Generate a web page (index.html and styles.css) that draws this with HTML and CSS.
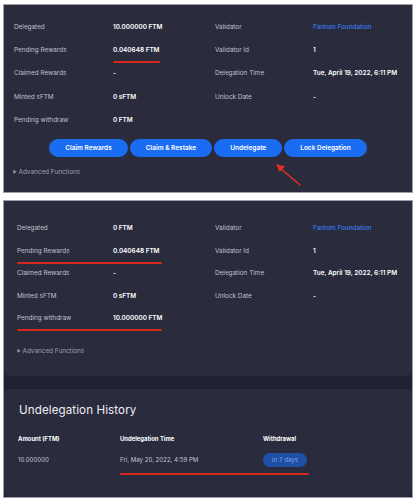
FILE: index.html
```html
<!DOCTYPE html>
<html lang="en">
<head>
    <meta charset="UTF-8">
    <meta name="viewport" content="width=device-width, initial-scale=1.0">
    <title>Delegation</title>
    <link rel="stylesheet" href="styles.css">
</head>
<body>

    <!-- delegation before undelegating -->
    <div class="panel panel-first">
        <div class="info">
            <div class="label">Delegated</div>
            <div class="value">10.000000 FTM</div>
            <div class="label">Validator</div>
            <div class="value link">Fantom Foundation</div>

            <div class="label">Pending Rewards</div>
            <div class="value mark mark-value">0.040648 FTM</div>
            <div class="label">Validator Id</div>
            <div class="value">1</div>

            <div class="label">Claimed Rewards</div>
            <div class="value">-</div>
            <div class="label">Delegation Time</div>
            <div class="value">Tue, April 19, 2022, 6:11 PM</div>

            <div class="label">Minted sFTM</div>
            <div class="value">0 sFTM</div>
            <div class="label">Unlock Date</div>
            <div class="value">-</div>

            <div class="label">Pending withdraw</div>
            <div class="value">0 FTM</div>
        </div>

        <div class="actions">
            <button class="btn">Claim Rewards</button>
            <button class="btn">Claim &amp; Restake</button>
            <button class="btn btn-undelegate">Undelegate</button>
            <button class="btn">Lock Delegation</button>
        </div>

        <div class="advanced"><span class="caret">&#9654;</span> Advanced Functions</div>

        <!-- arrow pointing at the undelegate button -->
        <svg class="arrow" width="30" height="26" viewBox="0 0 30 26">
            <line x1="26" y1="23" x2="6" y2="6" stroke="#e0301e" stroke-width="1.6" stroke-linecap="round"/>
            <polygon points="2,2 11,4.5 5.5,10" fill="#e0301e"/>
        </svg>
    </div>

    <!-- after undelegating -->
    <div class="panel panel-second">
        <div class="card card-info">
            <div class="info info-second">
                <div class="label">Delegated</div>
                <div class="value">0 FTM</div>
                <div class="label">Validator</div>
                <div class="value link">Fantom Foundation</div>

                <div class="label mark mark-row">Pending Rewards</div>
                <div class="value">0.040648 FTM</div>
                <div class="label">Validator Id</div>
                <div class="value">1</div>

                <div class="label">Claimed Rewards</div>
                <div class="value">-</div>
                <div class="label">Delegation Time</div>
                <div class="value">Tue, April 19, 2022, 6:11 PM</div>

                <div class="label">Minted sFTM</div>
                <div class="value">0 sFTM</div>
                <div class="label">Unlock Date</div>
                <div class="value">-</div>

                <div class="label mark mark-row">Pending withdraw</div>
                <div class="value">10.000000 FTM</div>
            </div>

            <div class="advanced advanced-second"><span class="caret">&#9654;</span> Advanced Functions</div>
        </div>

        <div class="card card-history">
            <h2 class="history-title">Undelegation History</h2>
            <div class="history">
                <div class="th">Amount (FTM)</div>
                <div class="th">Undelegation Time</div>
                <div class="th">Withdrawal</div>

                <div class="td">10.000000</div>
                <div class="td mark mark-time">Fri, May 20, 2022, 4:59 PM</div>
                <div class="td"><span class="pill">in 7 days</span></div>
            </div>
        </div>
    </div>

</body>
</html>
```

FILE: styles.css
```css
*
{
    box-sizing: border-box;
}

body
{
    margin: 0; padding: 4px 5px 2px 3px;
    background-color: #ffffff;
    font-family: Inter, "Noto Sans", sans-serif;
}

.panel
{
    position: relative;
    background-color: #2a2b3d;
    border: 1px solid #9d9ea8;
}

.panel-first
{
    height: 189px; padding-top: 10px;
}

.panel-second
{
    margin-top: 7px; height: 298px;
    background-color: #202130;
    display: flex; flex-direction: column; gap: 13px;
}

.card
{
    background-color: #2a2b3d; border-radius: 6px;
}

.card-info
{
    height: 175px; padding-top: 16px;
    border-radius: 0 0 6px 6px;
}

/* label / value grid */
.info
{
    display: grid;
    grid-template-columns: 99px 102px 98px 1fr;
    grid-auto-rows: 23.3px;
    align-items: center;
    padding-left: 10px;
    font-size: 6.4px;
}

.info-second
{
    grid-template-columns: 96px 102px 98px 1fr;
    grid-auto-rows: 22.5px;
    padding-left: 13px;
}

.label { color: #c0c1ca; }

.value { color: #ffffff; font-weight: 600; }

.link { color: #3d7bf0; font-weight: 500; }

/* red annotation lines */
.mark { position: relative; }

.mark::after
{
    content: ""; position: absolute; left: 0; height: 2px;
    background-color: #d8271c; border-radius: 1px;
}

.mark-value::after { top: 15px; width: 47px; }

.mark-row::after { top: 15px; width: 145px; }

.mark-time::after { top: 17px; width: 189px; }

.actions
{
    display: flex; justify-content: center; gap: 2px;
    margin-top: 8px;
}

.btn
{
    height: 18px; padding: 0 16px;
    border: none; border-radius: 9px;
    background-color: #1a6cf2; color: #ffffff;
    font-family: Inter, "Noto Sans", sans-serif;
    font-size: 6.5px; font-weight: 600;
}

.advanced
{
    margin-top: 11px; padding-left: 9px;
    color: #9fa0ab; font-size: 6.4px;
}

.advanced-second
{
    margin-top: 17px; padding-left: 13px;
}

.caret { font-size: 4px; vertical-align: 1px; }

.arrow
{
    position: absolute; left: 270px; top: 157px;
}

/* history card */
.card-history
{
    flex: 1; padding: 14px 14px 0 14px;
}

.history-title
{
    margin: 0; padding-left: 1px;
    font-size: 11.6px; font-weight: 400;
    color: #eeeef3; letter-spacing: 0.1px;
}

.history
{
    display: grid;
    grid-template-columns: 102px 143px 1fr;
    margin-top: 14px;
    grid-template-rows: 14px 29px;
    align-items: center;
}

.th
{
    font-size: 5.9px; font-weight: 700; color: #ffffff;
}

.td
{
    font-size: 6.1px; color: #c4c5ce;
}

.pill
{
    display: inline-block; height: 14px; line-height: 14px; padding: 0 9px;
    border-radius: 7px; background-color: #1f4ea5; color: #7ea5ee;
    font-size: 6.2px;
}
```
